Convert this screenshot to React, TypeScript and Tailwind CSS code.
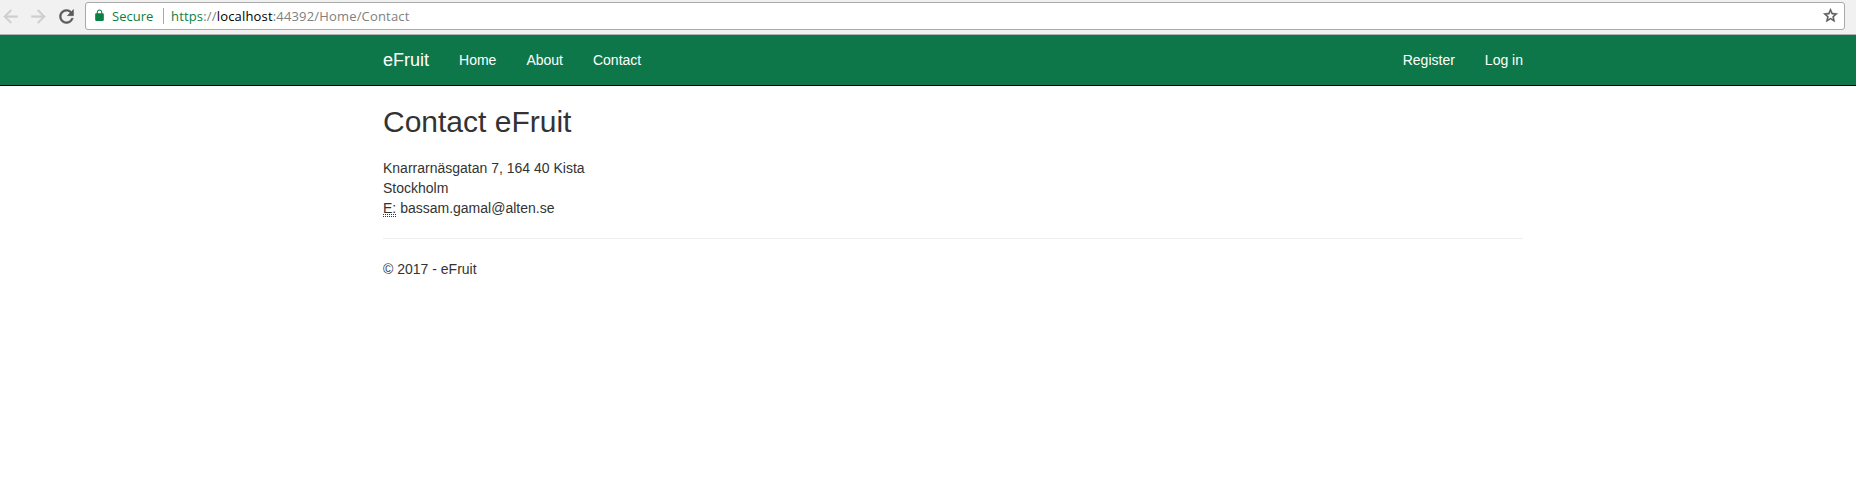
import React from "react";

function Glyph({ d, className }: { d: string; className: string }) {
  return (
    <svg viewBox="0 0 24 24" fill="currentColor" className={`shrink-0 ${className}`}>
      <path d={d} />
    </svg>
  );
}

const BACK = "M20 11H7.83l5.59-5.59L12 4l-8 8 8 8 1.41-1.41L7.83 13H20v-2z";
const FORWARD = "M12 4l-1.41 1.41L16.17 11H4v2h12.17l-5.58 5.59L12 20l8-8z";
const RELOAD =
  "M17.65 6.35C16.2 4.9 14.21 4 12 4c-4.42 0-7.99 3.58-7.99 8s3.57 8 7.99 8c3.73 0 6.84-2.55 7.73-6h-2.08c-.82 2.33-3.04 4-5.65 4-3.31 0-6-2.69-6-6s2.69-6 6-6c1.66 0 3.14.69 4.22 1.78L13 11h7V4l-2.35 2.35z";
const LOCK =
  "M18 8h-1V6c0-2.76-2.24-5-5-5S7 3.24 7 6v2H6c-1.1 0-2 .9-2 2v10c0 1.1.9 2 2 2h12c1.1 0 2-.9 2-2V10c0-1.1-.9-2-2-2zm-2.9 0H8.9V6c0-1.71 1.39-3.1 3.1-3.1 1.71 0 3.1 1.39 3.1 3.1v2z";
const STAR =
  "M22 9.24l-7.19-.62L12 2 9.19 8.63 2 9.24l5.46 4.73L5.82 21 12 17.27 18.18 21l-1.63-7.03L22 9.24zM12 15.4l-3.76 2.27 1-4.28-3.32-2.88 4.38-.38L12 6.1l1.71 4.04 4.38.38-3.32 2.88 1 4.28L12 15.4z";

function BrowserBar() {
  return (
    <div className="flex h-[35px] border-b border-[#b3b3b3] bg-[#f1f1f1] font-['Open_Sans','Noto_Sans',sans-serif] text-[13px]">
      <div className="flex h-8 w-[85px] shrink-0 items-center">
        <Glyph d={BACK} className="size-[21px] stroke-[#cfcfcf] stroke-[0.5] text-[#cfcfcf]" />
        <Glyph d={FORWARD} className="ml-[7px] size-[21px] stroke-[#cfcfcf] stroke-[0.5] text-[#cfcfcf]" />
        <Glyph d={RELOAD} className="ml-[7px] size-[21px] stroke-[#5a5a5a] stroke-[0.6] text-[#5a5a5a]" />
      </div>
      <div className="mt-[2px] flex h-7 w-[1760px] items-center rounded-[3px] border border-[#a9a9a9] bg-white pl-[7px] pr-[5px]">
        <Glyph d={LOCK} className="mb-px size-[13px] text-[#0b8043]" />
        <span className="ml-[6px] w-[51px] text-[#0b8043]">Secure</span>
        <span className="h-4 w-px bg-[#a9a9a9]" />
        <span className="ml-[7px] flex-1 whitespace-nowrap tracking-[0.17px] text-[#808080]">
          <span className="text-[#0b8043]">https</span>://<span className="text-black">localhost</span>:44392/Home/Contact
        </span>
        <Glyph d={STAR} className="mb-px size-[17px] stroke-[#5a5a5a] stroke-[0.6] text-[#5a5a5a]" />
      </div>
    </div>
  );
}

export default function App() {
  return (
    <div className="min-h-[479px] bg-white font-['Liberation_Sans',Arial,sans-serif] text-[14px] leading-[20px] text-[#333]">
      <BrowserBar />
      <nav className="h-[51px] border-b border-black bg-[#0e774a] text-white">
        <div className="ml-[383px] flex h-[50px] w-[1140px] items-center">
          <a className="text-[18px]">eFruit</a>
          <a className="ml-[30px]">Home</a>
          <a className="ml-[30px]">About</a>
          <a className="ml-[30px]">Contact</a>
          <a className="ml-auto">Register</a>
          <a className="ml-[30px]">Log in</a>
        </div>
      </nav>
      <main className="ml-[383px] w-[1140px] pt-[19px]">
        <h2 className="text-[30px] leading-[33px]">Contact eFruit</h2>
        <address className="mt-5 not-italic">
          Knarrarnäsgatan 7, 164 40 Kista
          <br />
          Stockholm
          <br />
          <abbr className="border-b border-dotted border-[#333] underline decoration-[#333] decoration-dotted decoration-1">E:</abbr>{" "}
          bassam.gamal@alten.se
        </address>
        <hr className="my-5 border-[#eee]" />
        <footer>© 2017 - eFruit</footer>
      </main>
    </div>
  );
}
